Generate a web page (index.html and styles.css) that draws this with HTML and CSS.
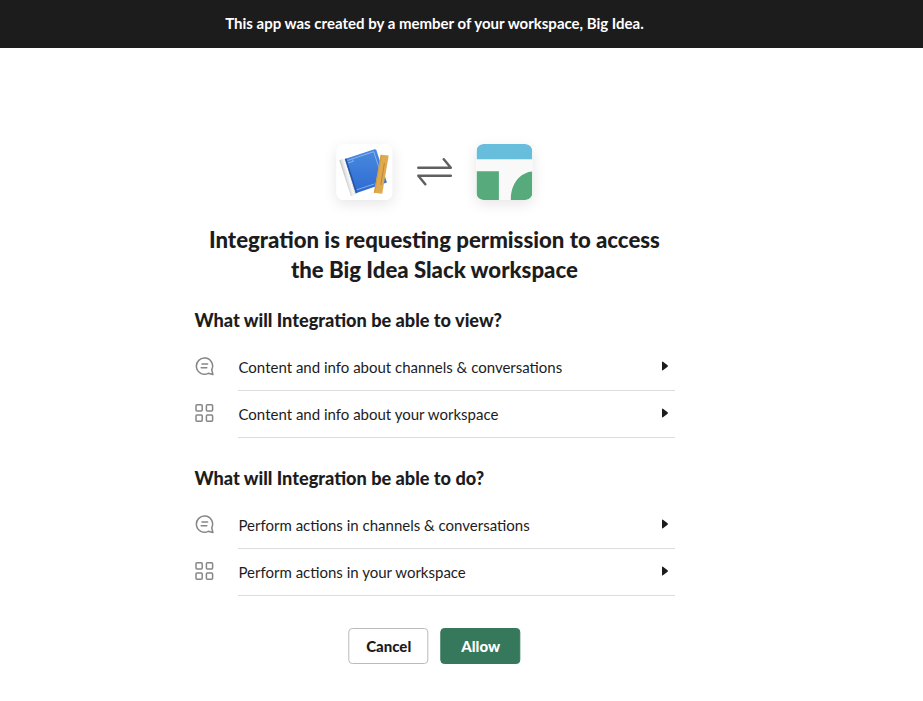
FILE: index.html
```html
<!DOCTYPE html>
<html lang="en">
<head>
<meta charset="utf-8">
<title>Authorize Integration</title>
<link rel="stylesheet" href="styles.css">
</head>
<body>
<svg class="defs" aria-hidden="true">
  <symbol id="chat" viewBox="0 0 20 20"><g fill="none" stroke="currentColor" stroke-width="1.5" stroke-linecap="round" stroke-linejoin="round"><path d="M17.700 13.800A8.100 8.100 0 1 0 14.200 17.300L18.900 18.500z"/><path d="M8 8h5.600M7.200 11.700h5.600"/></g></symbol>
  <symbol id="grid" viewBox="0 0 20 20"><g fill="none" stroke="currentColor" stroke-width="1.5"><rect x="2" y="1.800" width="6.200" height="6.200" rx="1"/><rect x="12.400" y="1.800" width="6.200" height="6.200" rx="1"/><rect x="2" y="12" width="6.200" height="6.200" rx="1"/><rect x="12.400" y="12" width="6.200" height="6.200" rx="1"/></g></symbol>
  <symbol id="caret" viewBox="0 0 8 10"><path d="M1 1.200Q1 .2 2 .8L6.600 4.300Q7.300 5 6.600 5.700L2 9.200Q1 9.800 1 8.800z" fill="currentColor"/></symbol>
</svg>
<header class="banner">This app was created by a member of your workspace, Big Idea.</header>
<main class="consent">
  <div class="logos">
    <svg class="logo" viewBox="0 0 56 56">
      <defs>
        <linearGradient id="blue" x2="0" y2="1"><stop stop-color="#4a8ade"/><stop offset="1" stop-color="#2d6ad3"/></linearGradient>
        <linearGradient id="spine" gradientUnits="userSpaceOnUse" x1="8" y1="34" x2="15" y2="32"><stop stop-color="#bcbcbc"/><stop offset=".3" stop-color="#e2e2e2"/><stop offset=".65" stop-color="#fafafa"/><stop offset="1" stop-color="#c4c4c4"/></linearGradient>
      </defs>
      <rect width="56" height="56" rx="6" fill="#fff"/>
      <path d="M3 16.500Q5 14.500 8.500 14.500L20 49.500Q17 52.500 14.500 52z" fill="url(#spine)"/>
      <path d="M8.500 15L38 5.200Q39.500 5 40 6.300L50.500 38.500L19.500 49.200z" fill="url(#blue)"/>
      <path d="M8.500 15L10 14.500L20.800 48.800L19.500 49.200z" fill="#2554a0"/>
      <path d="M11 16.500L37.300 7.700L47 37M20.300 45.800L38 40M11.500 19L17 17.200L16 15.500" fill="none" stroke="#a9c8f2" stroke-width=".7"/>
      <path d="M44.400 10.700L52.300 11.500L45.800 49.700L37.500 48.800z" fill="#dfa94d"/>
      <path d="M44.400 10.700L45.400 10.800L38.600 48.900L37.500 48.800z" fill="#d09a42"/>
      <path d="M48 19L44.400 41" stroke="#b88234" stroke-width=".9"/>
    </svg>
    <svg class="arrows" viewBox="0 0 36 30"><path d="M2.300 10.700H34.800L27.800 2.200M34.800 18.700H2.300L9.300 27.200" fill="none" stroke="#616061" stroke-width="2.500" stroke-linecap="round" stroke-linejoin="round"/></svg>
    <svg class="logo" viewBox="0 0 56 56"><defs><clipPath id="tile"><rect width="56" height="56" rx="7"/></clipPath></defs><g clip-path="url(#tile)"><path fill="#f9f9f9" d="M0 0h56v56H0z"/><path fill="#66bddc" d="M0 0h56v15.300H0z"/><path fill="#56aa7b" d="M0 27.300h22.500v28.700H0zM56 27.500v28.500H34.500C34 41 43 28.500 56 27.500"/></g></svg>
  </div>
  <h1>Integration is requesting permission to access<br>the Big Idea Slack workspace</h1>
  <section>
    <h2>What will Integration be able to view?</h2>
    <div class="scope"><svg class="icon"><use href="#chat"/></svg><div class="row"><span>Content and info about channels &amp; conversations</span><svg class="caret"><use href="#caret"/></svg></div></div>
    <div class="scope"><svg class="icon"><use href="#grid"/></svg><div class="row"><span>Content and info about your workspace</span><svg class="caret"><use href="#caret"/></svg></div></div>
  </section>
  <section>
    <h2>What will Integration be able to do?</h2>
    <div class="scope"><svg class="icon"><use href="#chat"/></svg><div class="row"><span>Perform actions in channels &amp; conversations</span><svg class="caret"><use href="#caret"/></svg></div></div>
    <div class="scope"><svg class="icon"><use href="#grid"/></svg><div class="row"><span>Perform actions in your workspace</span><svg class="caret"><use href="#caret"/></svg></div></div>
  </section>
  <div class="actions"><button class="cancel">Cancel</button><button class="allow">Allow</button></div>
</main>
</body>
</html>
```
FILE: styles.css
```css
* { box-sizing: border-box; }
body { margin: 0; background: #fff; color: #1d1c1d; font-family: Lato, sans-serif; }
.defs { position: absolute; width: 0; height: 0; }
.banner { height: 48px; padding-right: 54px; background: #1d1c1d; color: #fff; font-size: 15px; font-weight: 700; line-height: 46px; text-align: center; }
.consent { width: 480.8px; margin: 96px 0 0 194px; }
.logos { display: flex; align-items: center; justify-content: center; gap: 24px; height: 56px; }
.logo { width: 56px; height: 56px; border-radius: 7px; box-shadow: 0 4px 14px rgba(0, 0, 0, .1); transform: translateX(.4px); }
.arrows { width: 36px; height: 30px; }
h1 { margin: 25px 0 0; font-size: 22.18px; font-weight: 900; line-height: 30px; text-align: center; }
h2 { margin: 0 0 12px; padding-left: .5px; font-size: 18.15px; font-weight: 900; line-height: 24px; }
section { margin-top: 23px; }
section + section { margin-top: 28px; }
.scope { display: flex; align-items: flex-start; height: 47px; }
.icon { width: 20px; height: 20px; margin: 12px 24px 0 0; color: #868686; }
.row { display: flex; flex: 1; align-items: center; justify-content: space-between; height: 47px; padding: 0 6px 0 .5px; border-bottom: 1px solid #ddd; font-size: 15px; }
.caret { width: 8px; height: 10px; margin-top: -2px; }
.actions { display: flex; justify-content: center; gap: 12px; margin-top: 32px; }
button { width: 80px; height: 36px; padding: 0 0 1px; border: 1px solid #bbb; border-radius: 4px; background: #fff; color: #1d1c1d; font: 900 15px Lato, sans-serif; transform: translateX(.3px); }
.allow { border-color: #35785b; background: #35785b; color: #fff; }
```
